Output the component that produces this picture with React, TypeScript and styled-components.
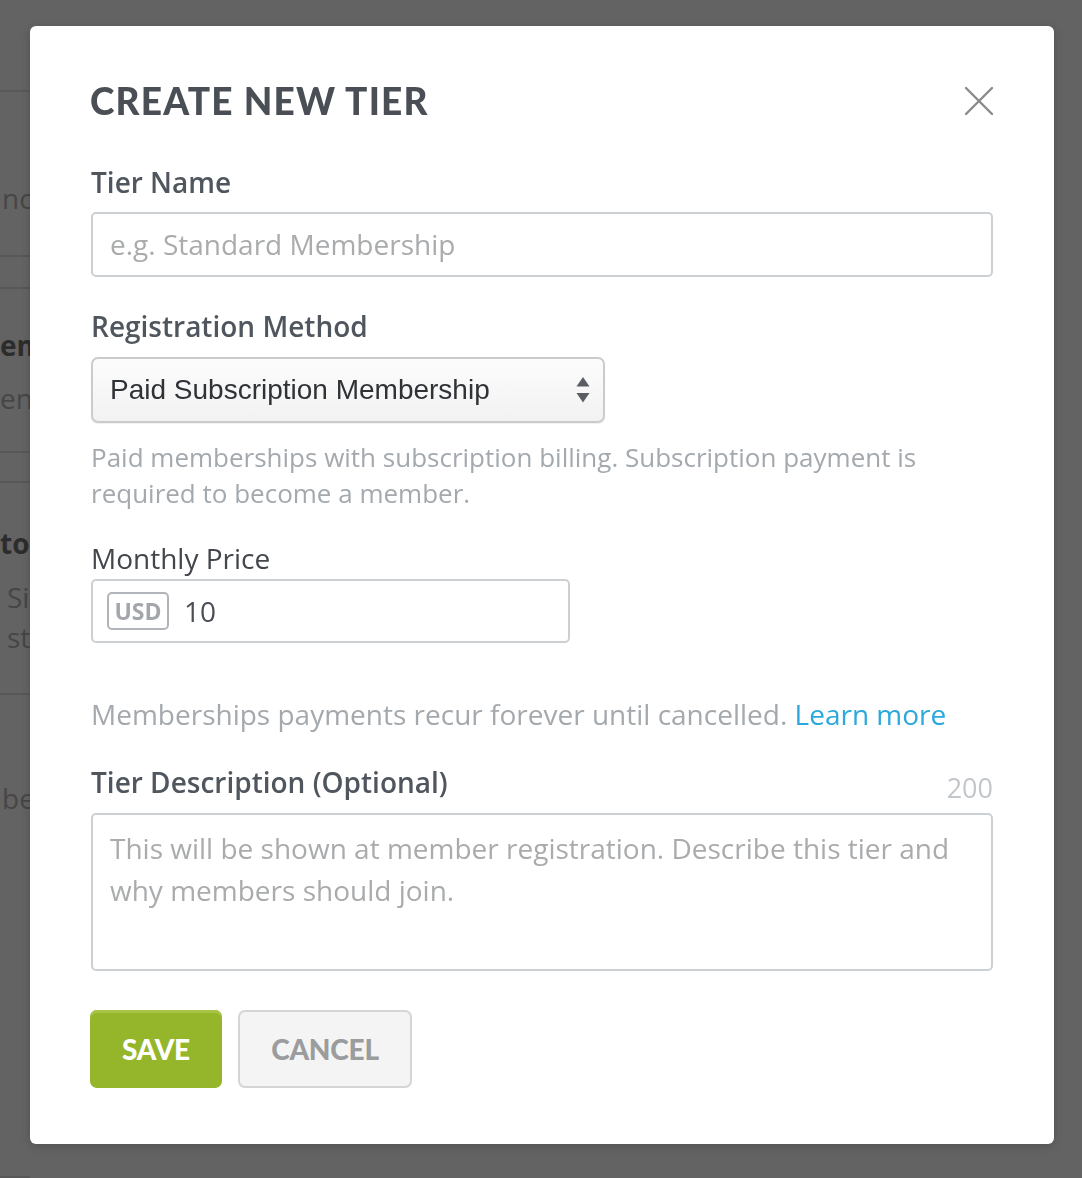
import React from "react";
import styled, { createGlobalStyle } from "styled-components";

const Global = createGlobalStyle`
  html, body { margin: 0; padding: 0; }
  body {
    width: 1082px;
    height: 1178px;
    overflow: hidden;
    background: #636363;
    font-family: "Open Sans", "Liberation Sans", sans-serif;
  }
  #root { height: 1178px; }
`;

/* ---------- page behind the dialog (dimmed) ---------- */
const BgPage = styled.div`
  display: flex;
  flex-direction: column;
  width: 30px;
  height: 1178px;
  overflow: hidden;
  background: #636363;
  font-family: "Open Sans", sans-serif;
  font-size: 28px;
`;

const BgSection = styled.div<{ $h: number; $pt?: number; $pl?: number }>`
  box-sizing: border-box;
  height: ${(p) => p.$h}px;
  flex: ${(p) => (p.$h === 0 ? "1" : "none")};
  padding-top: ${(p) => p.$pt ?? 0}px;
  padding-left: ${(p) => p.$pl ?? 0}px;
  border-bottom: 2px solid #585858;
  white-space: nowrap;
  overflow: hidden;
`;

const BgTitle = styled.div<{ $mb?: number }>`
  font-weight: 700;
  color: #2c2c2c;
  line-height: 36px;
  margin-bottom: ${(p) => p.$mb ?? 0}px;
`;

const BgText = styled.div<{ $lh?: number; $indent?: number }>`
  color: #464646;
  line-height: ${(p) => p.$lh ?? 36}px;
  padding-left: ${(p) => p.$indent ?? 0}px;
`;

/* ---------- dialog ---------- */
const Overlay = styled.div`
  position: fixed;
  inset: 0;
  display: flex;
  justify-content: flex-start;
  align-items: flex-start;
  padding: 26px 0 0 30px;
`;

const Modal = styled.div`
  box-sizing: border-box;
  width: 1024px;
  height: 1118px;
  background: #fff;
  border-radius: 6px;
  box-shadow: 0 2px 10px rgba(0, 0, 0, 0.18);
  padding: 51px 61px 56px 61px;
  display: flex;
  flex-direction: column;
`;

const Header = styled.div`
  display: flex;
  align-items: center;
  justify-content: space-between;
  height: 48px;
`;

const Title = styled.h1`
  margin: 0 0 0 -1px;
  font-family: Lato, "Open Sans", sans-serif;
  font-weight: 900;
  font-size: 37px;
  letter-spacing: 1.2px;
  line-height: 48px;
  color: #4a4f56;
`;

const CloseButton = styled.button`
  border: none;
  background: none;
  padding: 0;
  width: 30px;
  height: 30px;
  margin-right: -1px;
  display: flex;
  align-items: center;
  justify-content: center;
  cursor: pointer;
`;

const Label = styled.label<{ $mt: number; $regular?: boolean }>`
  display: block;
  margin-top: ${(p) => p.$mt}px;
  font-size: 28px;
  line-height: 36px;
  font-weight: ${(p) => (p.$regular ? 400 : 600)};
  color: ${(p) => (p.$regular ? "#43474c" : "#50565e")};
`;

const LabelRow = styled.div<{ $mt: number }>`
  display: flex;
  align-items: flex-end;
  justify-content: space-between;
  margin-top: ${(p) => p.$mt}px;
`;

const Counter = styled.span`
  font-size: 27px;
  line-height: 36px;
  color: #c3c6ca;
  margin-bottom: -6px;
`;

const TextInput = styled.input<{ $mt: number }>`
  box-sizing: border-box;
  display: block;
  width: 100%;
  height: 65px;
  margin-top: ${(p) => p.$mt}px;
  padding: 0 17px;
  border: 2px solid #cdd0d3;
  border-radius: 5px;
  font-family: "Open Sans", sans-serif;
  font-size: 28px;
  color: #4a4f55;
  outline: none;
  &::placeholder { color: #a9abad; }
`;

const SelectBox = styled.div`
  box-sizing: border-box;
  margin-top: 13px;
  width: 514px;
  height: 66px;
  padding: 0 13px 0 17px;
  border: 2px solid #cbcbcb;
  border-radius: 7px;
  background: linear-gradient(#fcfcfc, #f2f2f2);
  box-shadow: 0 1px 1px rgba(0, 0, 0, 0.06);
  display: flex;
  align-items: center;
  justify-content: space-between;
  font-family: "Liberation Sans", Arial, sans-serif;
  font-size: 28px;
  color: #2f3236;
`;

const HelpText = styled.p<{ $mt: number; $size?: number }>`
  margin: ${(p) => p.$mt}px 0 0;
  font-size: ${(p) => p.$size ?? 26}px;
  line-height: 36px;
  color: #a4a9ae;
`;

const LinkText = styled.a`
  color: #2ba8dc;
  text-decoration: none;
`;

const PriceBox = styled.div`
  box-sizing: border-box;
  margin-top: 3px;
  width: 479px;
  height: 65px;
  padding: 0 14px;
  border: 2px solid #cdd0d3;
  border-radius: 5px;
  display: flex;
  align-items: center;
  gap: 15px;
`;

const CurrencyTag = styled.span`
  box-sizing: border-box;
  height: 38px;
  width: 62px;
  border: 2px solid #b1b5b9;
  border-radius: 5px;
  display: flex;
  align-items: center;
  justify-content: center;
  font-size: 23px;
  font-weight: 700;
  color: #a3a7ab;
`;

const PriceValue = styled.span`
  font-size: 28px;
  color: #4a4f55;
`;

const TextArea = styled.textarea`
  box-sizing: border-box;
  display: block;
  width: 100%;
  height: 158px;
  margin-top: 13px;
  padding: 12px 17px;
  border: 2px solid #cdd0d3;
  border-radius: 5px;
  resize: none;
  font-family: "Open Sans", sans-serif;
  font-size: 28px;
  line-height: 42px;
  outline: none;
  &::placeholder { color: #a9abad; }
`;

const Actions = styled.div`
  display: flex;
  gap: 16px;
  margin-top: 39px;
  margin-left: -1px;
`;

const Button = styled.button<{ $primary?: boolean }>`
  box-sizing: border-box;
  height: 78px;
  width: ${(p) => (p.$primary ? 132 : 174)}px;
  padding: 0;
  border-radius: 7px;
  font-family: Lato, "Open Sans", sans-serif;
  font-weight: 900;
  font-size: 28px;
  letter-spacing: -0.2px;
  cursor: pointer;
  ${(p) =>
    p.$primary
      ? `
    background: #95b52b;
    border: none;
    color: #fff;
    box-shadow: inset 0 3px 0 #a8c447;
  `
      : `
    background: #f4f4f4;
    border: 2px solid #d5d5d5;
    color: #9b9c9d;
  `}
`;

function CloseIcon() {
  return (
    <svg width="30" height="30" viewBox="0 0 30 30">
      <path d="M2 2 L28 28 M28 2 L2 28" stroke="#8a8a8a" strokeWidth="2.4" strokeLinecap="round" />
    </svg>
  );
}

function SelectArrows() {
  return (
    <svg width="14" height="26" viewBox="0 0 14 26">
      <path d="M7 0 L13.5 9.5 L0.5 9.5 Z" fill="#5a5e63" />
      <path d="M0.5 16 L13.5 16 L7 25.5 Z" fill="#5a5e63" />
    </svg>
  );
}

export default function App() {
  return (
    <>
      <Global />
      <BgPage aria-hidden="true">
        <BgSection $h={92} />
        <BgSection $h={165} $pt={88} $pl={2}>
          <BgText>nce</BgText>
        </BgSection>
        <BgSection $h={32} />
        <BgSection $h={164} $pt={38}>
          <BgTitle $mb={17}>em</BgTitle>
          <BgText>ent</BgText>
        </BgSection>
        <BgSection $h={30} />
        <BgSection $h={212} $pt={42}>
          <BgTitle $mb={16}>to S</BgTitle>
          <BgText $lh={40} $indent={7}>Si</BgText>
          <BgText $lh={40} $indent={7}>st</BgText>
        </BgSection>
        <BgSection $h={0} $pt={85} $pl={2}>
          <BgText>be</BgText>
        </BgSection>
      </BgPage>

      <Overlay>
        <Modal role="dialog" aria-label="Create new tier">
          <Header>
            <Title>CREATE NEW TIER</Title>
            <CloseButton aria-label="Close">
              <CloseIcon />
            </CloseButton>
          </Header>

          <Label $mt={39}>Tier Name</Label>
          <TextInput $mt={12} placeholder="e.g. Standard Membership" />

          <Label $mt={31}>Registration Method</Label>
          <SelectBox>
            <span>Paid Subscription Membership</span>
            <SelectArrows />
          </SelectBox>
          <HelpText $mt={16}>
            Paid memberships with subscription billing. Subscription payment is required to become a member.
          </HelpText>

          <Label $mt={29} $regular>
            Monthly Price
          </Label>
          <PriceBox>
            <CurrencyTag>USD</CurrencyTag>
            <PriceValue>10</PriceValue>
          </PriceBox>

          <HelpText $mt={53} $size={28}>
            Memberships payments recur forever until cancelled. <LinkText href="#">Learn more</LinkText>
          </HelpText>

          <LabelRow $mt={32}>
            <Label $mt={0}>Tier Description (Optional)</Label>
            <Counter>200</Counter>
          </LabelRow>
          <TextArea placeholder="This will be shown at member registration. Describe this tier and why members should join." />

          <Actions>
            <Button $primary>SAVE</Button>
            <Button>CANCEL</Button>
          </Actions>
        </Modal>
      </Overlay>
    </>
  );
}
